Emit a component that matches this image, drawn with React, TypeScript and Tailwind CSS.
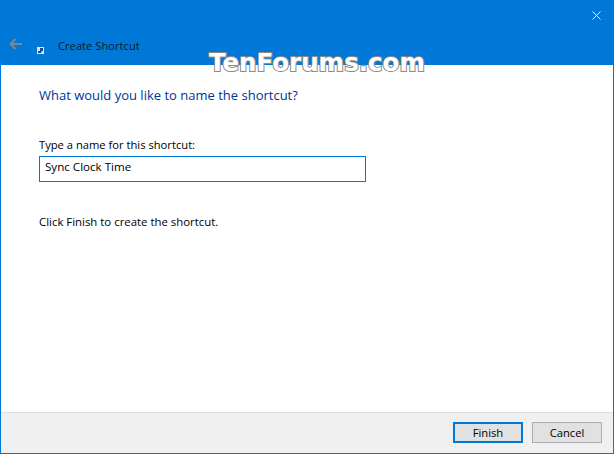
import { X } from "lucide-react"

const font = "font-['Open_Sans','Noto_Sans',sans-serif]"

function ShortcutIcon() {
  return (
    <svg width="7" height="7" viewBox="0 0 7 7" className="shrink-0">
      <rect width="7" height="7" fill="#dfe6ee" />
      <path d="M3 1h3v3H5L4 6H1V4h2z" fill="#1a4a8f" />
    </svg>
  )
}

function BackArrow() {
  return (
    <svg width="13" height="12" viewBox="0 0 13 12" fill="none" stroke="#7c8792" strokeWidth="2" className="shrink-0">
      <path d="M6.5 1 1.5 6l5 5M2 6h11" />
    </svg>
  )
}

export default function App() {
  return (
    <div className={`relative flex h-[454px] w-[614px] flex-col overflow-hidden border-x border-b border-[#0078d7] bg-white text-[11.2px] text-black ${font}`}>
      <header className="flex h-[65px] shrink-0 flex-col bg-[#0078d7]">
        <div className="flex h-[30px] justify-end pr-[9px] pt-[8px]">
          <X size={15} strokeWidth={1.4} className="text-white" />
        </div>
        <div className="flex items-start">
          <div className="ml-[8px] mt-[8px]">
            <BackArrow />
          </div>
          <div className="ml-[15px] mt-[17px]">
            <ShortcutIcon />
          </div>
          <span className="ml-[14px] mt-[8px] leading-[16px] text-[#0a1a2a]">Create Shortcut</span>
        </div>
      </header>

      <main className="flex flex-1 flex-col pl-[38px]">
        <h1 className="mt-[20px] text-[13px] font-normal leading-[20px] text-[#003399]">What would you like to name the shortcut?</h1>
        <label className="mt-[32px] leading-[16px]">Type a name for this shortcut:</label>
        <div className="mt-[3px] flex h-[26px] w-[327px] items-center border border-[#0078d7] pb-[5px] pl-[5px] text-[11.6px] leading-[16px]">Sync Clock Time</div>
        <p className="mt-[32px] text-[11.4px] leading-[16px]">Click Finish to create the shortcut.</p>
      </main>

      <footer className="flex h-[41px] shrink-0 items-start justify-end gap-[9px] border-t border-[#dfdfdf] bg-[#f0f0f0] pr-[11px] pt-[9px]">
        <button className="h-[21px] w-[70px] border-2 border-[#0078d7] bg-[#e1e1e1] leading-[14px]">Finish</button>
        <button className="h-[21px] w-[70px] border border-[#adadad] bg-[#e1e1e1] leading-[14px]">Cancel</button>
      </footer>

      <span className="absolute left-[208px] top-[49px] font-['DejaVu_Sans',sans-serif] text-[24.5px] font-bold leading-[28px] text-white [-webkit-text-stroke:2px_#8a8a8a] [paint-order:stroke_fill]">
        TenForums.com
      </span>
    </div>
  )
}
